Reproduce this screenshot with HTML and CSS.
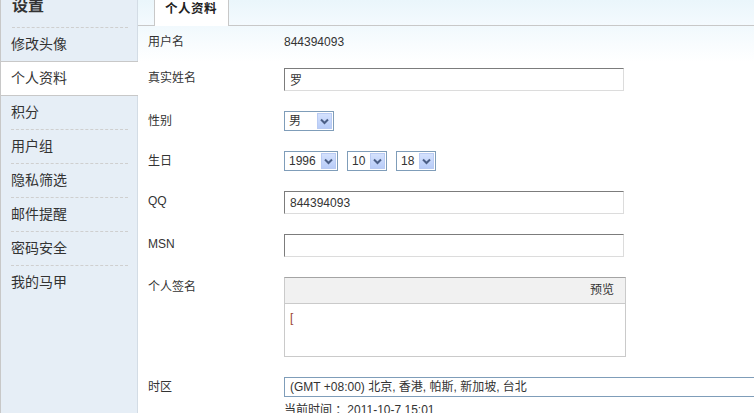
FILE: index.html
```html
<!DOCTYPE html>
<html lang="zh-CN">
<head>
    <meta charset="UTF-8">
    <title>设置 - 个人资料</title>
    <link rel="stylesheet" href="styles.css">
</head>
<body>
    <div class="layout">
        <aside class="side">
            <h2 class="side-title">设置</h2>
            <ul class="menu">
                <li>修改头像</li>
                <li class="active">个人资料</li>
                <li>积分</li>
                <li>用户组</li>
                <li>隐私筛选</li>
                <li>邮件提醒</li>
                <li>密码安全</li>
                <li>我的马甲</li>
            </ul>
        </aside>

        <main class="main">
            <div class="tabs">
                <span class="tab">个人资料</span>
            </div>

            <div class="form">
                <div class="row first">
                    <div class="label">用户名</div>
                    <div class="value">844394093</div>
                </div>
                <div class="row">
                    <div class="label">真实姓名</div>
                    <div><input class="txt" type="text" value="罗"></div>
                </div>
                <div class="row">
                    <div class="label">性别</div>
                    <div class="selects">
                        <div class="select w50"><span>男</span><i class="arrow"><svg width="9" height="7" viewBox="0 0 9 7"><path d="M1 1.5 L4.5 5 L8 1.5" fill="none" stroke="#4b5f86" stroke-width="2"/></svg></i></div>
                    </div>
                </div>
                <div class="row">
                    <div class="label">生日</div>
                    <div class="selects">
                        <div class="select w54"><span>1996</span><i class="arrow"><svg width="9" height="7" viewBox="0 0 9 7"><path d="M1 1.5 L4.5 5 L8 1.5" fill="none" stroke="#4b5f86" stroke-width="2"/></svg></i></div>
                        <div class="select w40"><span>10</span><i class="arrow"><svg width="9" height="7" viewBox="0 0 9 7"><path d="M1 1.5 L4.5 5 L8 1.5" fill="none" stroke="#4b5f86" stroke-width="2"/></svg></i></div>
                        <div class="select w40"><span>18</span><i class="arrow"><svg width="9" height="7" viewBox="0 0 9 7"><path d="M1 1.5 L4.5 5 L8 1.5" fill="none" stroke="#4b5f86" stroke-width="2"/></svg></i></div>
                    </div>
                </div>
                <div class="row">
                    <div class="label">QQ</div>
                    <div><input class="txt" type="text" value="844394093"></div>
                </div>
                <div class="row">
                    <div class="label">MSN</div>
                    <div><input class="txt" type="text" value=""></div>
                </div>
                <div class="row">
                    <div class="label">个人签名</div>
                    <div class="sign">
                        <div class="sign-head">预览</div>
                        <div class="sign-body"><span class="bracket">[</span></div>
                    </div>
                </div>
                <div class="row">
                    <div class="label">时区</div>
                    <div>
                        <div class="select tz"><span>(GMT +08:00) 北京, 香港, 帕斯, 新加坡, 台北</span></div>
                        <div class="now">当前时间 ：2011-10-7 15:01</div>
                    </div>
                </div>
            </div>
        </main>
    </div>
</body>
</html>
```

FILE: styles.css
```css
/* Global */
html, body {
    margin: 0;
    height: 100%;
    overflow: hidden;
}

body {
    font-family: 'Liberation Sans', 'Noto Sans CJK SC', sans-serif;
    font-size: 12px;
    color: #333;
    background: #fff;
}

.layout {
    display: flex;
    height: 100vh;
}

/* Sidebar */
.side {
    width: 136px;
    flex-shrink: 0;
    background: #e6eef6;
    border-left: 1px solid #c8c8c8;
    border-right: 1px solid #d3dce5;
}

.side-title {
    margin: -12px 9px 0 11px;
    height: 40px;
    box-sizing: border-box;
    line-height: 36px;
    font-size: 16px;
    font-weight: bold;
    color: #333;
    border-bottom: 1px dashed #cfcfcf;
}

.menu {
    list-style: none;
    margin: 0;
    padding: 0;
}

.menu li {
    height: 33px;
    line-height: 33px;
    margin: 0 9px 0 10px;
    border-top: 1px dashed #cfcfcf;
    font-size: 14px;
    color: #333;
}

.menu li:first-child {
    border-top: none;
}

.menu li.active {
    margin: 0 -1px 0 0;
    padding-left: 10px;
    background: #fff;
    border-top: 1px solid #c8c8c8;
    border-bottom: 1px solid #c8c8c8;
}

.menu li.active + li {
    border-top: none;
}

/* Main */
.main {
    flex: 1;
    min-width: 0;
    background: linear-gradient(#eaf6fb, #f4fafe 25px, #f1f9fd 26px, #fff 62px);
}

.tabs {
    height: 25px;
    border-bottom: 1px solid #c8c8c8;
    display: flex;
    align-items: flex-end;
}

.tab {
    margin: 0 0 -1px 16px;
    height: 26px;
    box-sizing: border-box;
    padding: 0 11px 0 10px;
    line-height: 18px;
    background: #fff;
    border-left: 1px solid #c8c8c8;
    border-right: 1px solid #c8c8c8;
    font-weight: bold;
    font-size: 12.5px;
    color: #222;
    letter-spacing: 0.5px;
}

.form {
    padding-left: 10px;
}

.row {
    display: grid;
    grid-template-columns: 136px 1fr;
    padding: 10px 0;
}

.row.first {
    padding: 6px 0;
}

.label,
.value {
    line-height: 20px;
}

.txt {
    display: block;
    width: 340px;
    height: 23px;
    box-sizing: border-box;
    margin: 0;
    padding: 0 5px;
    border: 1px solid;
    border-color: #7c7c7c #dcdcdc #dcdcdc #7c7c7c;
    font-family: 'Liberation Sans', 'Noto Sans CJK SC', sans-serif;
    font-size: 12px;
    color: #333;
    outline: none;
}

.selects {
    display: flex;
    gap: 9px;
}

.select {
    height: 20px;
    box-sizing: border-box;
    border: 1px solid #7f9db9;
    background: #fff;
    display: flex;
    align-items: center;
    padding-left: 4px;
    line-height: 18px;
}

.select .arrow {
    margin: 0 1px 0 auto;
    width: 15px;
    height: 16px;
    box-sizing: border-box;
    border: 1px solid #b9cbf3;
    background: linear-gradient(#d4e1fd, #b8ccf8);
    display: flex;
    align-items: center;
    justify-content: center;
}

.w50 { width: 50px; }
.w54 { width: 54px; }
.w40 { width: 40px; }

.select.tz {
    width: 520px;
    padding-left: 5px;
}

.now {
    margin-top: 4px;
    line-height: 18px;
}

/* Signature box */
.sign {
    width: 340px;
    border: 1px solid #cacaca;
    border-top-color: #a4a4a4;
}

.sign-head {
    height: 25px;
    line-height: 25px;
    background: #f1f1f1;
    border-bottom: 1px solid #cacaca;
    text-align: right;
    padding-right: 11px;
}

.sign-body {
    height: 52px;
    box-sizing: border-box;
    padding: 6px 5px;
    line-height: 16px;
}

.bracket {
    color: #9a4636;
}
```
